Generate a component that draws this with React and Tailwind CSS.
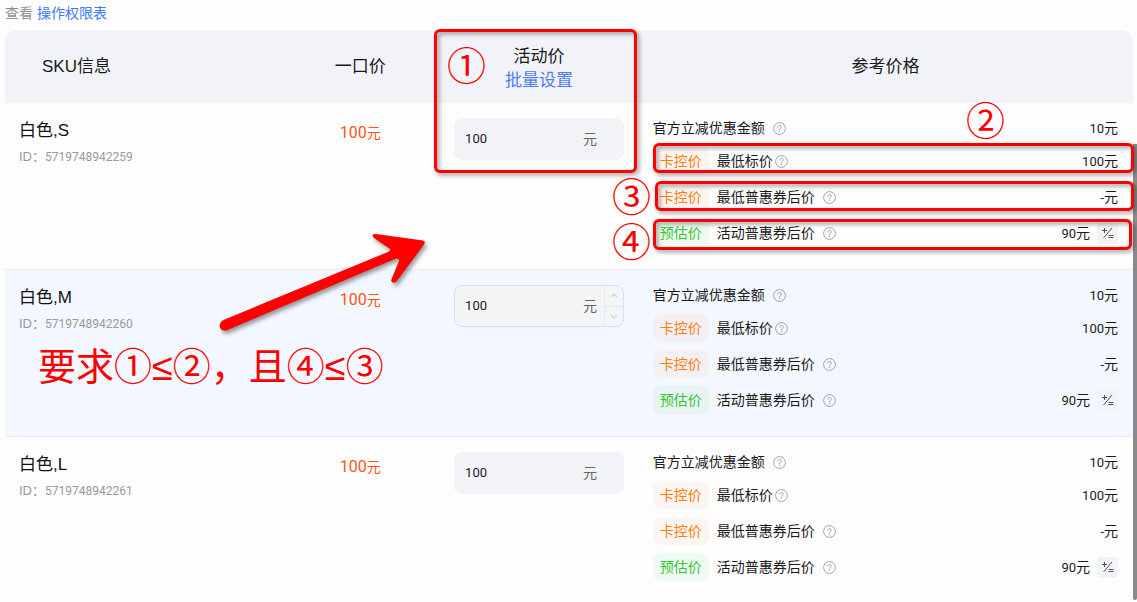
import React, { useState } from 'react'

const ROWS = [
  { name: '白色,S', id: '5719748942259', price: '100' },
  { name: '白色,M', id: '5719748942260', price: '100', active: true },
  { name: '白色,L', id: '5719748942261', price: '100' },
]

const REFS = [
  { tag: '卡控价', label: '最低标价', value: '100', tight: true },
  { tag: '卡控价', label: '最低普惠券后价', value: '-' },
  { tag: '预估价', label: '活动普惠券后价', value: '90', green: true, calc: true },
]

const NUM = "font-['Roboto','Noto_Sans_CJK_SC',sans-serif]"

function HelpIcon() {
  return (
    <svg width="13" height="13" viewBox="0 0 13 13" fill="none" stroke="#9a9a9a" strokeWidth="0.9" className="shrink-0">
      <circle cx="6.5" cy="6.5" r="5.9" />
      <path d="M4.8 5.1a1.7 1.7 0 1 1 2.6 1.4c-.6.4-.9.7-.9 1.4" strokeLinecap="round" />
      <circle cx="6.5" cy="9.6" r="0.3" fill="#9a9a9a" />
    </svg>
  )
}

function CalcIcon() {
  return (
    <svg width="13" height="13" viewBox="0 0 13 13" fill="none" stroke="#555" strokeWidth="1">
      <path d="M1 3.5h5M3.5 1v5M11 1L2.5 11M7.500 8.500h5M7.500 10.500h5" />
    </svg>
  )
}

function Amount({ value }) {
  return (
    <span className="ml-auto">
      <span className={`text-[13px] ${NUM}`}>{value}</span>元
    </span>
  )
}

function PriceInput({ row }) {
  const [value, setValue] = useState(row.price)
  const step = d => setValue(v => String(Math.max(0, Number(v) + d)))

  return (
    <div className={`flex h-[42px] w-[170px] mx-auto rounded-lg overflow-hidden border ${row.active ? 'bg-[#f4f5f6] border-[#cfdffc]' : 'bg-[#f2f3f7] border-[#f2f3f7]'}`}>
      <label className="flex items-center flex-1 min-w-0 pl-[10px] pr-[7px]">
        <input
          value={value}
          onChange={e => setValue(e.target.value)}
          aria-label={`${row.name} 活动价`}
          className={`flex-1 min-w-0 bg-transparent outline-none text-[13px] text-[#1a1a1a] ${NUM}`}
        />
        <span className="text-sm text-[#666]">元</span>
      </label>
      <div className={`flex flex-col w-[19px] ${row.active ? 'border-l border-[#e6e8ec]' : 'invisible'}`}>
        <button onClick={() => step(1)} aria-label="+" className="flex-1 flex items-center justify-center border-b border-[#e6e8ec]">
          <svg width="8" height="5" viewBox="0 0 8 5" fill="none" stroke="#d3d5d9" strokeWidth="1.5"><path d="M1 4l3-3 3 3" /></svg>
        </button>
        <button onClick={() => step(-1)} aria-label="-" className="flex-1 flex items-center justify-center">
          <svg width="8" height="5" viewBox="0 0 8 5" fill="none" stroke="#d3d5d9" strokeWidth="1.5"><path d="M1 1l3 3 3-3" /></svg>
        </button>
      </div>
    </div>
  )
}

function RefPrices() {
  return (
    <div className="flex flex-col gap-2 text-sm text-[#1a1a1a]">
      <div className="flex items-center h-[22px]">
        <span className="mr-2">官方立减优惠金额</span>
        <HelpIcon />
        <Amount value="10" />
      </div>
      {REFS.map(r => (
        <div key={r.label} className="flex items-center h-7">
          <span className={`flex items-center h-7 px-[7px] mr-2 rounded-lg ${r.green ? 'bg-[#2fc52f]/6 text-[#32c832]' : 'bg-[#ff7a1a]/6 text-[#ff7d0c]'}`}>{r.tag}</span>
          <span className={r.tight ? 'mr-0.5' : 'mr-2'}>{r.label}</span>
          <HelpIcon />
          <Amount value={r.value} />
          {r.calc && (
            <button aria-label="+/=" className="ml-[7px] w-[21px] h-[21px] rounded bg-[#f2f3f6] flex items-center justify-center">
              <CalcIcon />
            </button>
          )}
        </div>
      ))}
    </div>
  )
}

const BOX = 'absolute border-[3px] border-[#fe0000] rounded-md drop-shadow-[2px_2px_2px_rgba(0,0,0,0.45)]'
const MARK = 'absolute leading-10'

// Red notes lying over the table
function Notes() {
  return (
    <div className="absolute inset-0 pointer-events-none text-[#fe0000] text-[39px]">
      <div className={`${BOX} left-[434px] top-[29px] w-[203px] h-36`} />
      <div className={`${BOX} left-[653px] right-[3px] top-[143px] h-[30px]`} />
      <div className={`${BOX} left-[655px] right-[3px] top-[181px] h-[30px]`} />
      <div className={`${BOX} left-[653px] right-[5px] top-[219px] h-[31px]`} />
      <span className={`${MARK} left-[447px] top-[47px]`}>①</span>
      <span className={`${MARK} left-[966px] top-[102px]`}>②</span>
      <span className={`${MARK} left-[612px] top-[178px]`}>③</span>
      <span className={`${MARK} left-[612px] top-[223px]`}>④</span>
      <p className={`${MARK} left-[38px] top-[347px] text-[38px] whitespace-nowrap`}>要求①≤②，且④≤③</p>
      <svg className="absolute left-[210px] top-[225px] drop-shadow-[2px_3px_2px_rgba(0,0,0,0.4)]" width="225" height="115" viewBox="210 225 225 115">
        <path
          d="M223.5 320L389 251.5Q392 249 388 247.5L374 238Q370.5 234 376 234L423 240.5Q426 241.5 424 244.5L396.5 281.5Q393 284.5 391 280.5L399 261Q400 258 396 258.5L227.5 330Q221 332 219.7 326.5Q219.5 322 223.5 320Z"
          fill="#fe0000"
        />
      </svg>
    </div>
  )
}

export default function App() {
  return (
    <div className="relative min-h-screen overflow-hidden bg-[#fdfdfe] pl-[5px] pr-1 font-['Liberation_Sans','Noto_Sans_CJK_SC',sans-serif]">
      <p className="h-[30px] pt-[3px] text-sm text-[#8f8f8f]">
        查看 <a href="#permissions" className="text-[#3c7bf8]">操作权限表</a>
      </p>

      <table className="w-full table-fixed border-separate border-spacing-0">
        <colgroup>
          <col className="w-[24.4%]" />
          <col className="w-[14.2%]" />
          <col className="w-[17.5%]" />
          <col />
        </colgroup>
        <thead>
          <tr className="h-[73px] text-[17px] text-[#1a1a1a]">
            <th className="bg-[#f1f3f8] rounded-tl-xl font-normal text-left pl-[37px]">SKU信息</th>
            <th className="bg-[#f1f3f8] font-normal">一口价</th>
            <th className="bg-[#f1f3f8] font-normal leading-6">
              <div className="pt-1">活动价</div>
              <button className="block mx-auto text-[#4a7dfa]">批量设置</button>
            </th>
            <th className="bg-[#f1f3f8] rounded-tr-xl font-normal">参考价格</th>
          </tr>
        </thead>
        <tbody>
          {ROWS.map(row => (
            <tr key={row.id} className={`align-top ${row.active ? 'bg-[#f3f7ff]' : ''}`}>
              <td className="border-b border-[#e9ecf1] pl-[14px] pt-4">
                <div className="text-[17px] leading-6 text-[#111]">{row.name}</div>
                <div className="mt-1 text-[13px] leading-5 text-[#999]">
                  ID：<span className={`text-xs ${NUM}`}>{row.id}</span>
                </div>
              </td>
              <td className="border-b border-[#e9ecf1] pt-4 text-center text-[#ff5414] leading-7">
                <span className={`text-base leading-7 ${NUM}`}>{row.price}</span>
                <span className="text-sm leading-7">元</span>
              </td>
              <td className="border-b border-[#e9ecf1] pt-[15px]">
                <PriceInput row={row} />
              </td>
              <td className="border-b border-[#e9ecf1] px-[15px] pt-[14px] pb-[22px]">
                <RefPrices />
              </td>
            </tr>
          ))}
        </tbody>
      </table>

      {/* Scroll thumb */}
      <div className="absolute right-0 top-36 bottom-1 w-1 rounded-b bg-[#8a8a8a]" />
      <Notes />
    </div>
  )
}
